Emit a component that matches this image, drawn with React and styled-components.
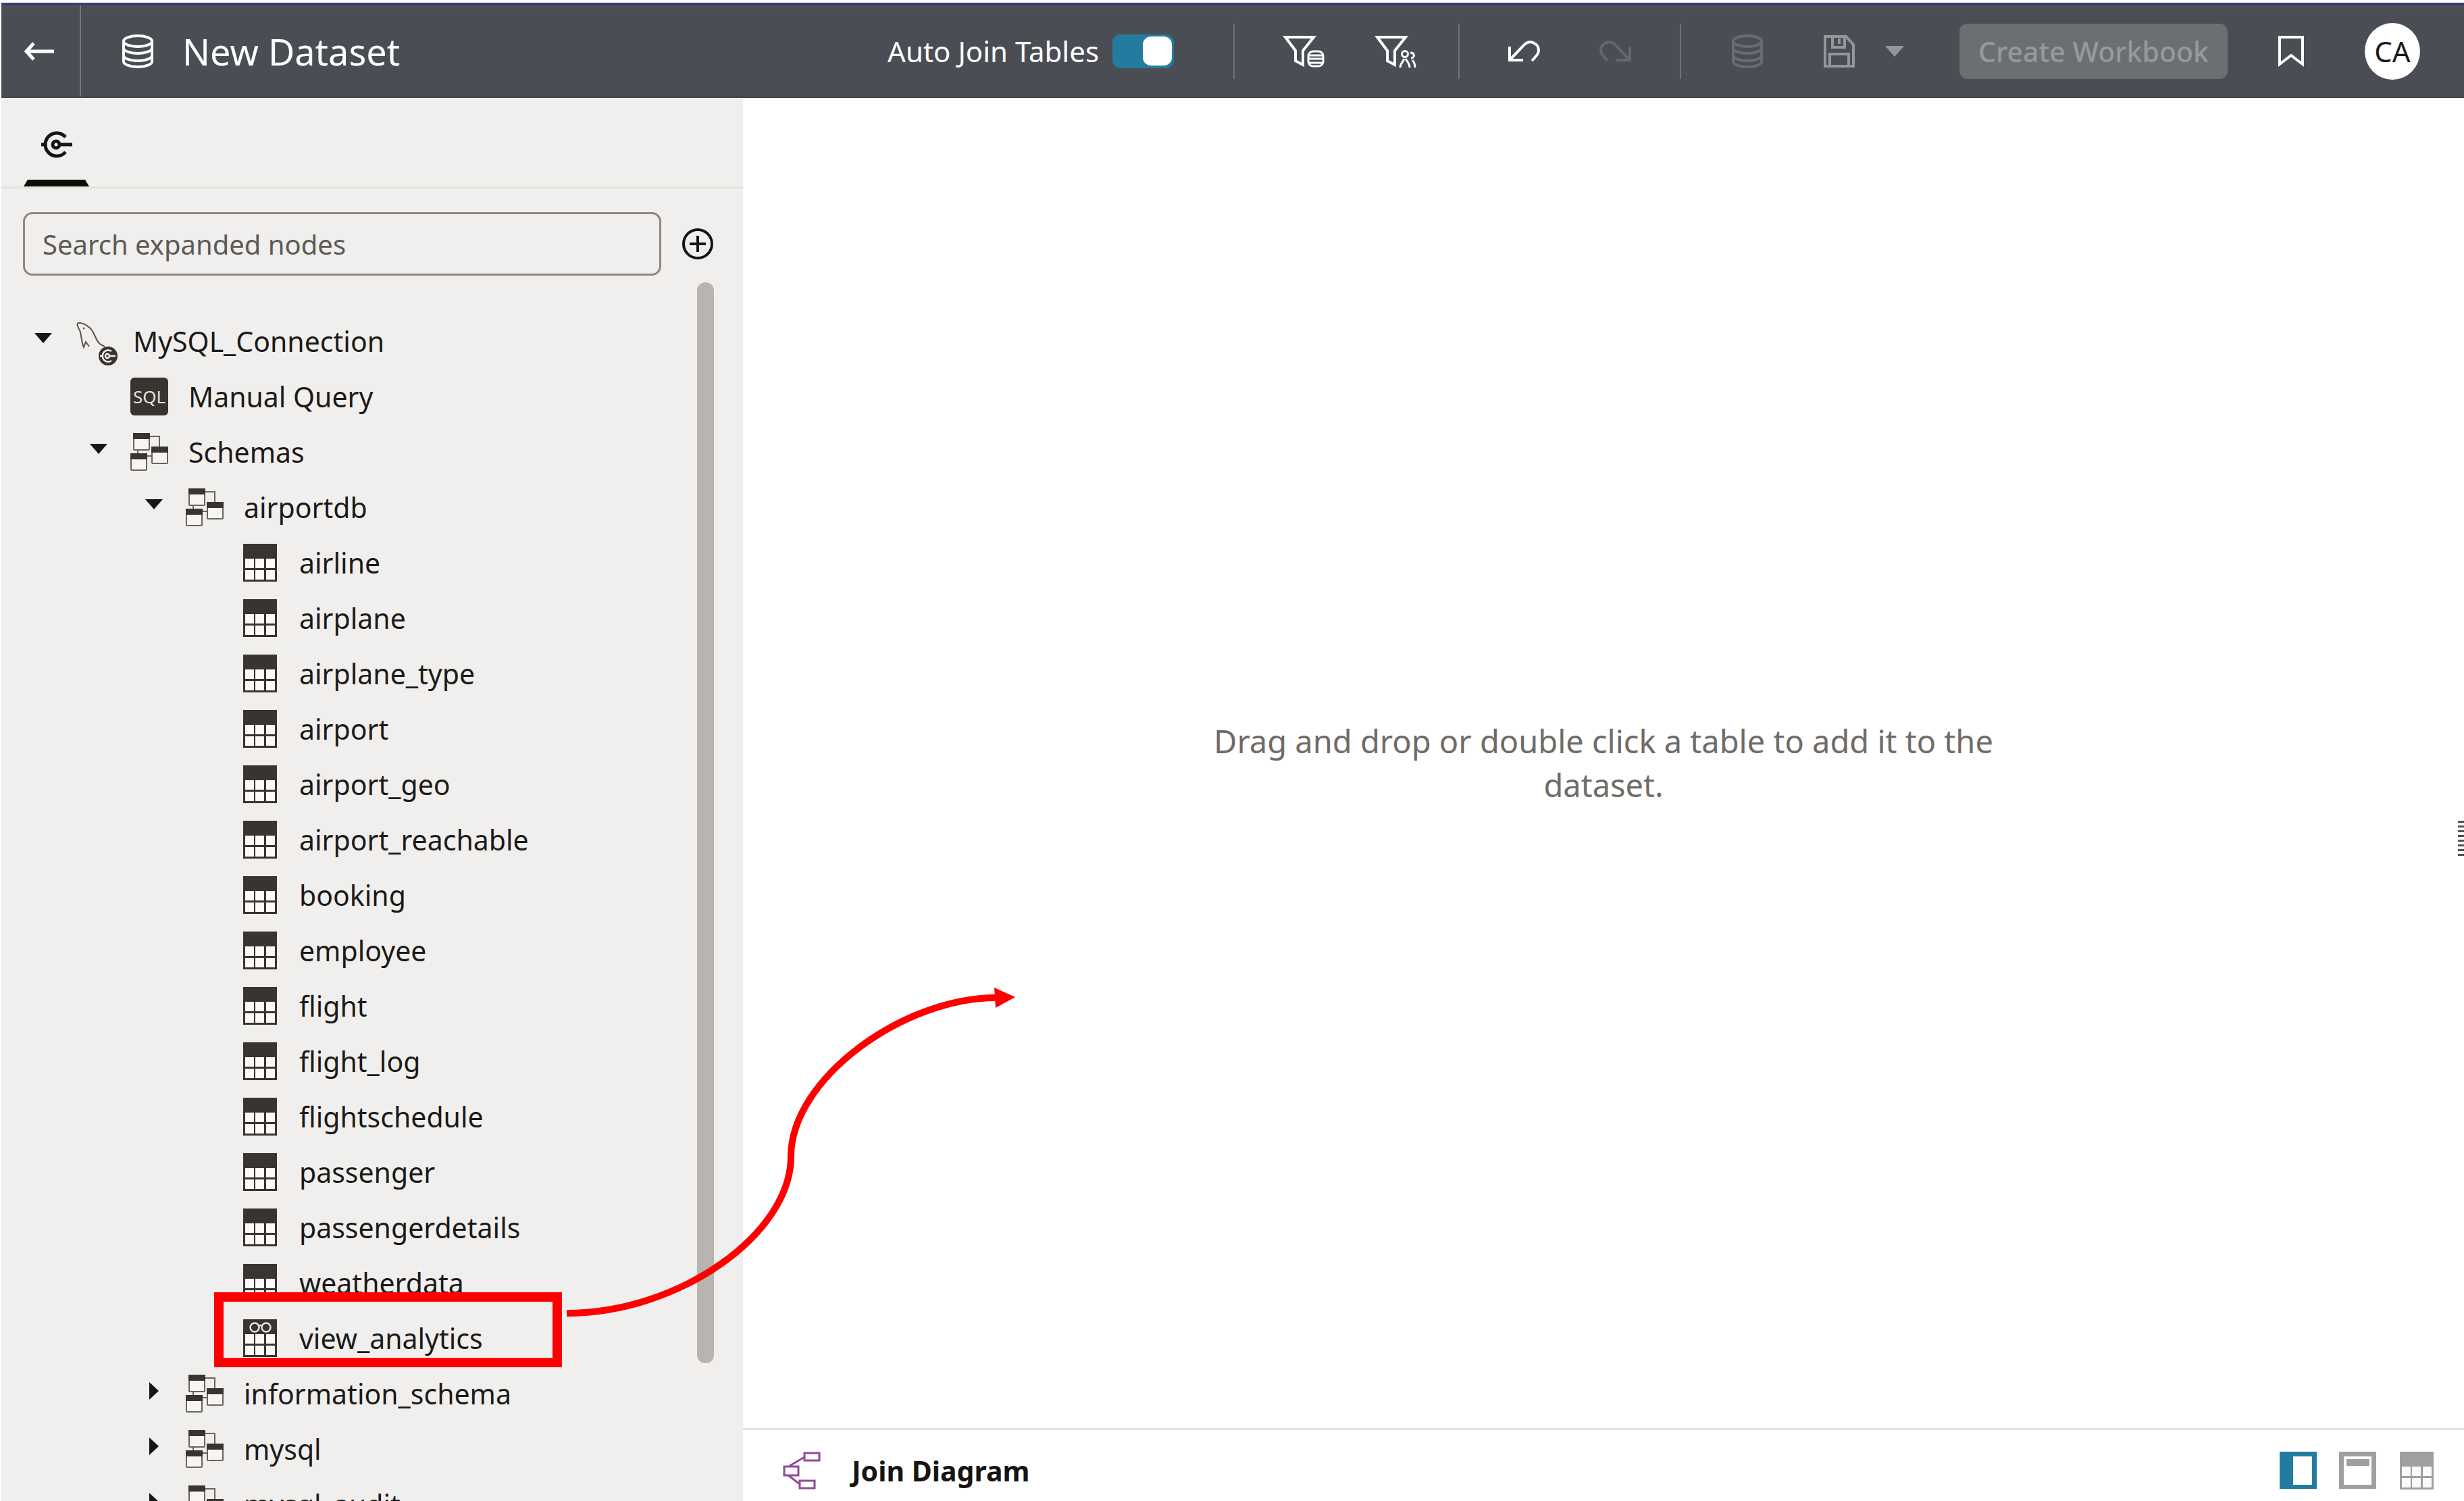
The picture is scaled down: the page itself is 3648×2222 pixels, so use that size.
import React, { useState } from "react";
import styled, { createGlobalStyle, css } from "styled-components";

const GlobalStyle = createGlobalStyle`
  *, *::before, *::after { box-sizing: border-box; }
  body {
    margin: 0;
    background: #ffffff;
    color: #1c1a18;
    font-family: "Noto Sans", "Open Sans", sans-serif;
    font-size: 40px;
  }
  button, input { font: inherit; }
`;

const Page = styled.div`
  position: relative;
  display: flex;
  flex-direction: column;
  height: 100vh;
  overflow: hidden;
  padding: 4px 0 0 2px;
`;

const Header = styled.header`
  display: flex;
  align-items: center;
  flex: none;
  height: 141px;
  padding-right: 65px;
  border-top: 4px solid #43387a;
  border-bottom: 2px solid #3f434b;
  background: linear-gradient(#4c5051 0, #4a4d54 16px);
  color: #ffffff;
  font-size: 42px;
`;

const IconButton = styled.button`
  display: flex;
  align-items: center;
  justify-content: center;
  flex: none;
  width: ${(p) => p.$width || 64}px;
  height: 82px;
  padding: 0;
  border: 0;
  background: none;
  color: ${(p) => p.$color || "#ffffff"};

  svg { display: block; flex: none; }
`;

const BackArea = styled.div`
  display: flex;
  align-items: center;
  align-self: stretch;
  padding: 0 28px 0 24px;
  border-right: 2px solid #74777b;
`;

const TitleIcon = styled.span`
  display: flex;
  padding: 0 42px 0 60px;
`;

const Title = styled.h1`
  flex: 1;
  margin: 0;
  font-size: 54px;
  line-height: 64px;
  font-weight: 400;
`;

const ToggleLabel = styled.label`
  display: flex;
  align-items: center;
  gap: 20px;
`;

const Toggle = styled.input`
  appearance: none;
  display: flex;
  align-items: center;
  justify-content: flex-end;
  width: 91px;
  height: 50px;
  margin: 0;
  padding: 3px;
  border-radius: 12px;
  background: #237c9f;

  &::before {
    content: "";
    width: 43px;
    height: 43px;
    border-radius: 12px;
    background: #ffffff;
  }
  &:not(:checked) { justify-content: flex-start; background: #8a8d91; }
`;

const Rule = styled.span`
  flex: none;
  width: 2px;
  height: 82px;
  background: #6e7175;
`;

const Group = styled.div`
  display: flex;
  align-items: center;
  gap: ${(p) => p.$gap}px;
  padding: 0 ${(p) => p.$right}px 0 ${(p) => p.$left}px;
`;

const CreateButton = styled.button`
  width: 397px;
  height: 82px;
  padding: 0;
  border: 0;
  border-radius: 12px;
  background: #6a6f71;
  color: #97999c;
  font-size: 41px;
  font-weight: 500;
`;

const Avatar = styled.button`
  width: 82px;
  height: 84px;
  padding: 0;
  border: 0;
  border-radius: 50%;
  background: #ffffff;
  color: #1c1a18;
`;

const Body = styled.div`
  display: flex;
  flex: 1;
  min-height: 0;
`;

const Sidebar = styled.aside`
  display: flex;
  flex-direction: column;
  flex: none;
  width: 1098px;
  overflow: hidden;
  background: #f0efed;
`;

const Tabs = styled.div`
  display: flex;
  flex: none;
  height: 134px;
  padding-left: 33px;
  border-bottom: 3px solid #e4e2df;
`;

const Tab = styled.button`
  display: flex;
  align-items: center;
  justify-content: center;
  width: 97px;
  padding: 16px 0 0;
  border: 0;
  border-bottom: 10px solid #0c0b0a;
  border-left: 6px solid transparent;
  border-right: 6px solid transparent;
  background: none;
`;

const SearchRow = styled.div`
  display: flex;
  align-items: center;
  flex: none;
  gap: 22px;
  padding: 35px 0 0 32px;
`;

const Search = styled.input`
  width: 945px;
  height: 94px;
  padding: 0 26px;
  border: 3px solid #8f8780;
  border-radius: 14px;
  outline: 0;
  background: transparent;

  &::placeholder { color: #5d5a57; opacity: 1; }
`;

const TreeArea = styled.div`
  display: flex;
  flex: 1;
  min-height: 0;
  padding: 10px 43px 0 0;
`;

const Tree = styled.ul`
  flex: 1;
  margin: 0;
  padding: 46px 0 0;
  overflow: hidden;
  list-style: none;
`;

const Row = styled.li`
  display: flex;
  align-items: center;
  height: 82px;
  padding-left: ${(p) => 30 + p.$level * 82}px;
`;

const CaretButton = styled.button`
  display: flex;
  align-items: center;
  justify-content: center;
  width: 64px;
  height: 64px;
  padding: 0 0 8px;
  border: 0;
  background: none;
`;

const RowIcon = styled.span`
  display: flex;
  justify-content: center;
  width: 86px;
  margin-right: 15px;
`;

const RowLabel = styled.span`
  font-size: 41px;
  line-height: 56px;
  white-space: nowrap;
`;

const SqlBadge = styled.span`
  display: flex;
  align-items: center;
  justify-content: center;
  width: 56px;
  height: 56px;
  border-radius: 6px;
  background: #38342f;
  color: #e4e2df;
  font-size: 26px;
  line-height: 32px;
`;

const Scrollbar = styled.div`
  flex: none;
  width: 25px;
  height: 1600px;
  border-radius: 12px;
  background: #bab4b0;
`;

const Main = styled.main`
  display: flex;
  flex-direction: column;
  flex: 1;
  min-width: 0;
`;

const Canvas = styled.section`
  display: flex;
  align-items: center;
  justify-content: center;
  flex: 1;
`;

const Hint = styled.p`
  max-width: 1200px;
  margin: 0;
  color: #6f6b67;
  font-size: 47px;
  line-height: 65px;
  text-align: center;
`;

const Footer = styled.footer`
  display: flex;
  align-items: center;
  flex: none;
  height: 108px;
  padding: 14px 42px 0 59px;
  border-top: 3px solid #e3e2dd;
`;

const FooterTitle = styled.h2`
  flex: 1;
  margin: 0 0 0 46px;
  color: #161513;
  font-size: 41px;
  line-height: 56px;
  font-weight: 700;
`;

const Views = styled.div`
  display: flex;
  align-items: center;
  gap: 32px;

  button { width: 56px; height: 56px; }
`;

const Grip = styled.button`
  position: absolute;
  top: 1215px;
  right: 0;
  width: 9px;
  height: 52px;
  padding: 0;
  border: 0;
  background: repeating-linear-gradient(#55524e 0 3px, #ffffff 3px 7px);
`;

const overlay = css`
  position: absolute;
  pointer-events: none;
`;

const Highlight = styled.div`
  ${overlay}
  top: 1913px;
  left: 317px;
  width: 515px;
  height: 111px;
  border: 14px solid #ff0000;
`;

const DragArrow = styled.svg`
  ${overlay}
  top: 1460px;
  left: 838px;
`;

const DbIcon = () => (
  <svg width="48" height="50" viewBox="0 0 48 50" fill="none" stroke="currentColor" strokeWidth="4">
    <ellipse cx="24" cy="10" rx="21" ry="8" />
    <path d="M3 10v30c0 4.500 9.500 8 21 8s21-3.500 21-8V10M3 20c0 4.500 9.500 8 21 8s21-3.500 21-8M3 31c0 4.500 9.500 8 21 8s21-3.500 21-8" />
  </svg>
);

const BackIcon = () => (
  <svg width="46" height="28" viewBox="0 0 46 28" fill="none" stroke="currentColor" strokeWidth="5">
    <path d="M4 14h41M15 2L4 14l11 12" />
  </svg>
);

const FunnelDb = () => (
  <svg width="62" height="50" viewBox="0 0 62 50" fill="none" stroke="currentColor">
    <path strokeWidth="4" d="M4 4h42L30 24v21l-11-6V24z" />
    <g strokeWidth="3">
      <rect x="38" y="25" width="22" height="22" rx="7" />
      <path d="M38 31h22M38 36h22M38 42h22" />
    </g>
  </svg>
);

const FunnelUsers = () => (
  <svg width="62" height="50" viewBox="0 0 62 50" fill="none" stroke="currentColor">
    <path strokeWidth="4" d="M4 4h42L30 24v21l-11-6V24z" />
    <g strokeWidth="3">
      <circle cx="45" cy="29" r="4.500" />
      <path d="M38 49c0-5 3-7 6-13M46 36c3 5 6 7 6 13M53 27c7 0 7 8 1 8M56 38c3 3 4 6 4 11" />
    </g>
  </svg>
);

const UndoIcon = ({ flip }) => (
  <svg width="48" height="34" viewBox="0 0 48 34" fill="none" stroke="currentColor" strokeWidth="4">
    <g transform={flip ? "translate(48 0) scale(-1 1)" : undefined}>
      <path d="M3 10v20h20M4 29L24 8c9-10 22-2 22 7 0 6-4 9-10 16" />
    </g>
  </svg>
);

const SaveIcon = () => (
  <svg width="48" height="50" viewBox="0 0 48 50" fill="none" stroke="currentColor" strokeWidth="4">
    <path d="M3 3h31l11 12v32H3zM14 3v16h18V3M24 6v8M10 47V29h28v18" />
  </svg>
);

const MenuCaret = () => (
  <svg width="30" height="16" viewBox="0 0 30 16" fill="currentColor">
    <path d="M1 0h28L15 16z" />
  </svg>
);

const BookmarkIcon = () => (
  <svg width="40" height="48" viewBox="0 0 40 48" fill="none" stroke="currentColor" strokeWidth="4">
    <path d="M3 3h34v40L20 30 3 43z" />
  </svg>
);

const ConnectIcon = () => (
  <svg width="48" height="40" viewBox="0 0 48 40" fill="none" stroke="#161513" strokeWidth="5">
    <path d="M37 9A17 17 0 1 0 37 31M1 20h6M28 20h19" />
    <circle cx="23" cy="20" r="5" />
  </svg>
);

const AddIcon = () => (
  <svg width="48" height="48" viewBox="0 0 48 48" fill="none" stroke="#161513" strokeWidth="4">
    <circle cx="24" cy="24" r="21" />
    <path d="M24 12v24M12 24h24" />
  </svg>
);

const Caret = ({ open }) => (
  <svg width="28" height="26" viewBox="0 0 28 26" fill="#161513">
    {open ? <path d="M1 5h26L14 20z" /> : <path d="M7 0l14 13L7 26z" />}
  </svg>
);

const MysqlIcon = () => (
  <svg width="72" height="74" viewBox="-10 -8 72 74" fill="none" stroke="#57534f" strokeWidth="2">
    <path d="M19 37l-5-7-3 8C7 30 8 20 5 13 2 8 0 3 3 2c7-1 17 6 21 12 5 9 6 16 12 20l6 3M10 9l2 2" />
    <circle cx="47" cy="51" r="14" fill="#38342f" stroke="none" />
    <g stroke="#f0efed" strokeWidth="2.500">
      <path d="M52 44a8.500 8.500 0 1 0 0 14M35 51h4M48 51h10" />
      <circle cx="46" cy="51" r="3" />
    </g>
  </svg>
);

const SchemaIcon = () => (
  <svg width="56" height="56" viewBox="0 0 56 56" fill="none" stroke="#69655f" strokeWidth="2">
    <path d="M28 5h15v16M11 22v8M24 34h9" />
    {[[5, 1], [32, 21], [1, 31]].map(([x, y]) => (
      <g key={x}>
        <rect x={x} y={y} width="23" height="24" rx="1" fill="#f6f5f4" />
        <path d={`M${x - 1} ${y - 1}h25v9h-25z`} fill="#38342f" stroke="none" />
      </g>
    ))}
  </svg>
);

const TableIcon = ({ view, color = "#38342f" }) => (
  <svg width="50" height="56" viewBox="0 0 50 56">
    <path fill={color} d="M0 0h50v56H0z" />
    {[3, 18, 34].map((x) =>
      [22, 39].map((y) => <rect key={`${x}-${y}`} x={x} y={y} width="13" height="14" fill="#fbfaf9" />)
    )}
    {view && (
      <g fill="none" stroke="#e4e2df" strokeWidth="2.500">
        <circle cx="17" cy="12" r="6.500" />
        <circle cx="34" cy="12" r="6.500" />
        <path d="M23 10q2.500-2 5 0" />
      </g>
    )}
  </svg>
);

const JoinIcon = () => (
  <svg width="56" height="56" viewBox="0 0 56 56" fill="none" stroke="#95489b" strokeWidth="3">
    <path d="M32 2h22v11H32zM2 22h21v13H2zM25 43h22v11H25zM32 8L10 21M8 35l17 13" />
  </svg>
);

const SplitViewIcon = () => (
  <svg width="55" height="55" viewBox="0 0 55 55" fill="#237c9f">
    <path fillRule="evenodd" d="M0 0h55v55H0zM20 7v42h28V7z" />
  </svg>
);

const CardViewIcon = () => (
  <svg width="55" height="55" viewBox="0 0 55 55" fill="#9f9f9f">
    <path fillRule="evenodd" d="M0 0h55v55H0zM7 7v42h41V7z" />
    <path d="M11 11h34v10H11z" />
  </svg>
);

const tables = [
  "airline", "airplane", "airplane_type", "airport", "airport_geo", "airport_reachable",
  "booking", "employee", "flight", "flight_log", "flightschedule", "passenger",
  "passengerdetails", "weatherdata",
];

const nodes = [
  { level: 0, label: "MySQL_Connection", icon: <MysqlIcon />, open: true },
  { level: 1, label: "Manual Query", icon: <SqlBadge>SQL</SqlBadge> },
  { level: 1, label: "Schemas", icon: <SchemaIcon />, open: true },
  { level: 2, label: "airportdb", icon: <SchemaIcon />, open: true },
  ...tables.map((label) => ({ level: 3, label, icon: <TableIcon /> })),
  { level: 3, label: "view_analytics", icon: <TableIcon view /> },
  { level: 2, label: "information_schema", icon: <SchemaIcon />, open: false },
  { level: 2, label: "mysql", icon: <SchemaIcon />, open: false },
  { level: 2, label: "mysql_audit", icon: <SchemaIcon />, open: false },
];

export default function App() {
  const [autoJoin, setAutoJoin] = useState(true);
  return (
    <Page>
      <GlobalStyle />
      <Header>
        <BackArea>
          <IconButton aria-label="Back"><BackIcon /></IconButton>
        </BackArea>
        <TitleIcon><DbIcon /></TitleIcon>
        <Title>New Dataset</Title>
        <ToggleLabel>
          Auto Join Tables
          <Toggle type="checkbox" checked={autoJoin} onChange={(e) => setAutoJoin(e.target.checked)} />
        </ToggleLabel>
        <Group $left={88} $right={0} $gap={70}>
          <Rule />
          <IconButton aria-label="Data filters"><FunnelDb /></IconButton>
        </Group>
        <Group $left={72} $right={61} $gap={0}>
          <IconButton aria-label="User filters"><FunnelUsers /></IconButton>
        </Group>
        <Rule />
        <Group $left={63} $right={63} $gap={72}>
          <IconButton aria-label="Undo"><UndoIcon /></IconButton>
          <IconButton aria-label="Redo" $color="#64686c" disabled><UndoIcon flip /></IconButton>
        </Group>
        <Rule />
        <Group $left={66} $right={30} $gap={72}>
          <IconButton aria-label="Dataset" $color="#696c71" disabled><DbIcon /></IconButton>
          <IconButton aria-label="Save" $color="#94969a" disabled><SaveIcon /></IconButton>
        </Group>
        <IconButton aria-label="Save options" $width={40} $color="#94969a" disabled><MenuCaret /></IconButton>
        <Group $left={76} $right={77} $gap={62}>
          <CreateButton disabled>Create Workbook</CreateButton>
          <IconButton aria-label="Bookmark"><BookmarkIcon /></IconButton>
        </Group>
        <Avatar>CA</Avatar>
      </Header>
      <Body>
        <Sidebar>
          <Tabs role="tablist">
            <Tab role="tab" aria-selected="true" aria-label="Connections"><ConnectIcon /></Tab>
          </Tabs>
          <SearchRow>
            <Search aria-label="Search expanded nodes" placeholder="Search expanded nodes" />
            <IconButton aria-label="Add connection"><AddIcon /></IconButton>
          </SearchRow>
          <TreeArea>
            <Tree>
              {nodes.map((n) => (
                <Row key={n.label} $level={n.level}>
                  <CaretButton as={n.open === undefined ? "span" : "button"} aria-label={n.open === undefined ? undefined : `Toggle ${n.label}`}>
                    {n.open !== undefined && <Caret open={n.open} />}
                  </CaretButton>
                  <RowIcon>{n.icon}</RowIcon>
                  <RowLabel>{n.label}</RowLabel>
                </Row>
              ))}
            </Tree>
            <Scrollbar />
          </TreeArea>
        </Sidebar>
        <Main>
          <Canvas>
            <Hint>Drag and drop or double click a table to add it to the dataset.</Hint>
          </Canvas>
          <Footer>
            <JoinIcon />
            <FooterTitle>Join Diagram</FooterTitle>
            <Views>
              <IconButton aria-label="Split view"><SplitViewIcon /></IconButton>
              <IconButton aria-label="Card view"><CardViewIcon /></IconButton>
              <IconButton aria-label="Table view"><TableIcon color="#9f9f9f" /></IconButton>
            </Views>
          </Footer>
        </Main>
      </Body>
      <Grip aria-label="Resize panel" />
      <Highlight />
      <DragArrow width="666" height="492" viewBox="0 0 666 492" fill="none" stroke="#ff0000" strokeWidth="10">
        <path d="M1 484C167 484 333 367 333 252S499 17 637 17" />
        <path fill="#ff0000" stroke="none" d="M634 2l31 14-29 16z" />
      </DragArrow>
    </Page>
  );
}
